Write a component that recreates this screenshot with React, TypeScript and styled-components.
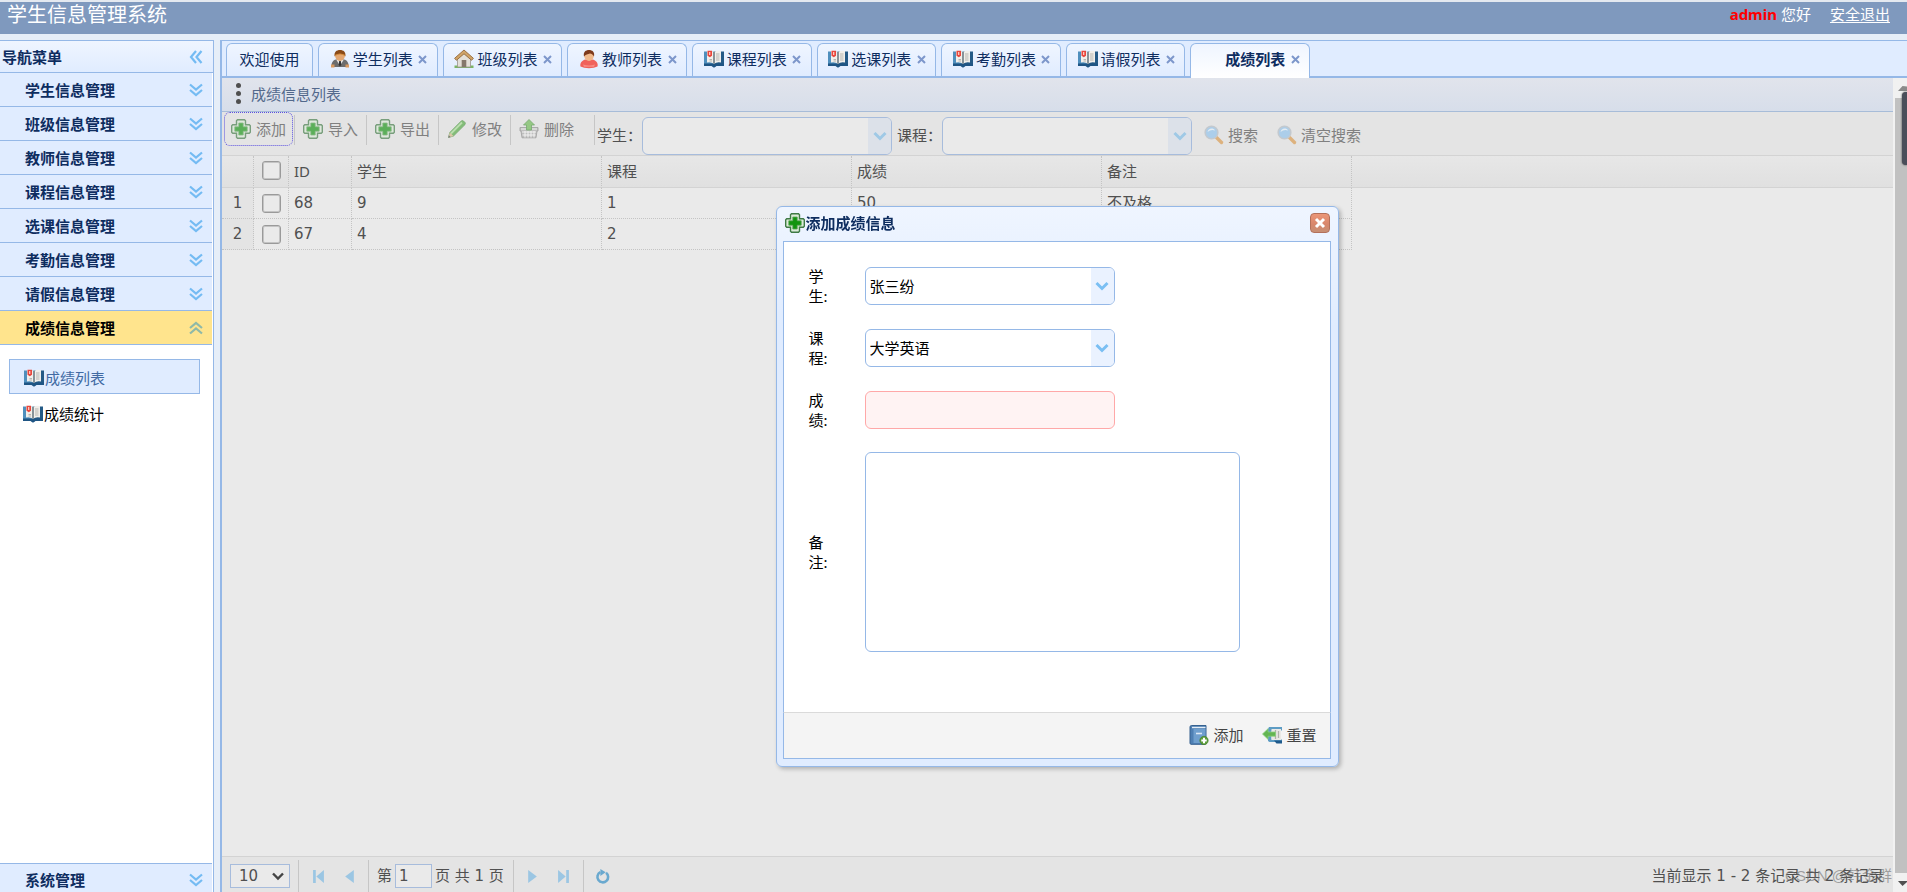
import React from "react";
import styled, { createGlobalStyle, css } from "styled-components";

const line = "#95b8e7";

const Global = createGlobalStyle`
  * { box-sizing: border-box; }
  html, body, #root { height: 100%; margin: 0; }
  body {
    overflow: hidden;
    background: #e6eef8;
    font: 15px/20px "Noto Sans", "Noto Sans CJK SC", sans-serif;
    color: #000;
  }
  button, input, select, textarea { font: inherit; color: inherit; margin: 0; }
  button { padding: 0; border: 0; background: none; white-space: nowrap; }
`;

/* ---------- icons ---------- */

const Icon = styled.svg<{ $size?: number }>`
  width: ${(p) => p.$size ?? 20}px;
  height: ${(p) => p.$size ?? 20}px;
  flex: none;
  display: block;
`;

const PlusIcon = () => (
  <Icon viewBox="0 0 20 20">
    <path d="M6.5 0.7h7l1 1v4h3.8l1 1v6.6l-1 1h-3.8v4l-1 1h-7l-1-1v-4H1.7l-1-1V6.7l1-1h3.8v-4z" fill="#dcebd9" stroke="#3f7a45" strokeWidth="1.4" />
    <path d="M7.8 4h4.4v3.8h4v4.4h-4V16H7.8v-3.8h-4V7.8h4z" fill="#12940f" stroke="#5aa357" strokeWidth="0.8" />
  </Icon>
);

const BookIcon = () => (
  <Icon viewBox="0 0 20 20">
    <path d="M0 2.500h10V18L8 17H0z" fill="#4f8fbd" />
    <path d="M10 2.500h10V17h-8l-2 1z" fill="#245a86" />
    <path d="M0 14.500h20V17h-7.500L10 18.800 7.500 17H0z" fill="#1f5584" />
    <path d="M3 2Q7 1.200 10 3Q13 1.200 17 2V13.500Q13 12.500 10 14.800Q7 12.500 3 13.500z" fill="#f1efeb" />
    <path d="M10 3v11.800" stroke="#7b8890" strokeWidth="1.800" />
    <path d="M12 5h3.500M12 7h3.500M12 9h3.500M12 11h3.500M5.500 10.500H8M5.500 12H8" stroke="#b5b5b0" strokeWidth="1" />
    <path d="M3.500 1.800h4.500v5L5.800 8.200 3.500 6.800z" fill="#e8463c" />
    <path d="M5.700 3v3" stroke="#fbd5d0" strokeWidth="1.200" />
  </Icon>
);

const StudentIcon = () => (
  <Icon viewBox="0 0 20 20">
    <path d="M1.500 18c-.5-4 1.500-7 4.500-7.500h8c3 .5 5 3.500 4.500 7.500z" fill="#6d6d6d" />
    <path d="M6.500 11h7L10 17z" fill="#e9e9e9" />
    <path d="M9.200 12h1.600l.6 4-1.400 1.500L8.600 16z" fill="#333" />
    <path d="M1 15.500h3.500v3H1zM15.500 15.500H19v3h-3.500z" fill="#d99b62" />
    <ellipse cx="10" cy="7.200" rx="4.800" ry="4.800" fill="#e3a772" />
    <path d="M4.600 7.500C4 3 6.500 1 10 1s6 2 5.400 6.500c-.9-1.500-3-2.500-5.400-2.500s-4.500 1-5.400 2.500z" fill="#8a4a17" />
    <path d="M5 6.500Q10 3.500 15 6.500" fill="none" stroke="#d98f3c" strokeWidth="1.200" />
  </Icon>
);

const TeacherIcon = () => (
  <Icon viewBox="0 0 20 20">
    <path d="M1.500 17.500c-1-3 1.500-6.500 5-7h7c3.500.5 6 4 5 7q-3 1.800-8.500 1.800t-8.500-1.800z" fill="#f0625c" />
    <path d="M4 15.500q6 2 12 0l-1 2.300H5z" fill="#f98e86" />
    <ellipse cx="10" cy="7.200" rx="4.700" ry="4.800" fill="#f0b98c" />
    <path d="M5 7.500C4 3 6.800 1 10 1s6 2 5 6.500C13.800 5.500 12.500 4.800 11 4.500 9 5.300 6.500 5.500 5 7.500z" fill="#7d3a1c" />
  </Icon>
);

const HouseIcon = () => (
  <Icon viewBox="0 0 20 20">
    <path d="M0.500 16.500h19V19h-19z" fill="#7cb565" />
    <path d="M3.500 9.500L10 4l6.500 5.500V18h-13z" fill="#e4e0d8" stroke="#9a948b" strokeWidth="0.800" />
    <path d="M7.700 11h4.600v7H7.700z" fill="#85776a" />
    <path d="M10 1L0.600 9.300l1.800 2L10 4.800l7.600 6.500 1.800-2z" fill="#d0a468" stroke="#94693a" strokeWidth="0.900" />
  </Icon>
);

const PencilIcon = () => (
  <Icon viewBox="0 0 20 20">
    <path d="M1.500 18.500l1.300-5L14.300 1.900q1-.9 2.400.3l1.100 1.100q1.100 1.300.2 2.300L6.500 17z" fill="#4fa83f" stroke="#3d8a35" strokeWidth="0.800" />
    <path d="M4 14.500L15 3.500" stroke="#a5dc93" strokeWidth="1.800" />
    <path d="M1.500 18.500l1.300-5L6.500 17z" fill="#d9b98a" />
    <path d="M1.200 18.800l.7-2.600 1.800 1.800z" fill="#444" />
  </Icon>
);

const BasketIcon = () => (
  <Icon viewBox="0 0 20 20">
    <path d="M1 8.500h18V12h-1l-1 6.800H3L2 12H1z" fill="#ababab" stroke="#858585" strokeWidth="0.900" />
    <path d="M3 13h14M3.500 16h13M6 12v6.500M9 12v6.500M12 12v6.500M15 12v6.500" stroke="#fafafa" strokeWidth="1" />
    <path d="M2 10h16" stroke="#ececec" strokeWidth="1.200" />
    <path d="M10 0.500l5.500 5.500h-3v5h-5V6h-3z" fill="#6cba52" stroke="#3f8a35" strokeWidth="0.800" />
  </Icon>
);

const SearchIcon = () => (
  <Icon viewBox="0 0 20 20">
    <path d="M12.500 12.500l5 5" stroke="#d98a2b" strokeWidth="3.400" strokeLinecap="round" />
    <circle cx="7.500" cy="7.500" r="6.300" fill="#7fbdf0" stroke="#a9b4bf" strokeWidth="1.600" />
    <path d="M3.500 7q1-4 5-3.500 2 .3 2.500 2-4-1.500-7.500 1.500z" fill="#e6f4ff" />
  </Icon>
);

const SaveBookIcon = () => (
  <Icon viewBox="0 0 20 20">
    <path d="M1 2q0-1.500 1.500-1.500H17V18q0 1-1 1.300H2Q1 19.300 1 18z" fill="#4f80b4" stroke="#36618f" />
    <path d="M4.500 4H16.500v14H4.500z" fill="#6f9fce" />
    <path d="M3 2.500h13.500" stroke="#e4edf6" strokeWidth="1.400" />
    <path d="M7 8.500h6" stroke="#dbe8f5" strokeWidth="1.600" />
    <circle cx="15" cy="15.500" r="4.200" fill="#5d9c3a" stroke="#3f7d25" strokeWidth="0.600" />
    <path d="M15 12.800v5.400M12.300 15.500h5.400" stroke="#fff" strokeWidth="2" />
  </Icon>
);

const ResetIcon = () => (
  <Icon viewBox="0 0 20 20">
    <path d="M7 2h13v3.500H9.500v9H20V17H7.500L6 16V4z" fill="#5d9cc4" />
    <path d="M12 15.500h8v3h-5.500z" fill="#1f5a8c" />
    <path d="M9.500 4h9.500v11H9.500z" fill="#e9e9e6" />
    <path d="M13.500 5v9M16.500 6v7" stroke="#b0b0ac" strokeWidth="1.300" />
    <path d="M0.500 9L6 3.800v3.200h7.500v4.200H6v3.100z" fill="#63b552" stroke="#8ccf7c" strokeWidth="0.800" />
  </Icon>
);

const DoubleChevron = ({ turn = 0, color = "#74bbf3" }: { turn?: number; color?: string }) => (
  <Icon viewBox="0 0 14 14" $size={14}>
    <g fill="none" stroke={color} strokeWidth="2.200" transform={`rotate(${turn} 7 7)`}>
      <path d="M1 1.500L7 6.500 13 1.500" />
      <path d="M1 7L7 12 13 7" />
    </g>
  </Icon>
);

const ChevronDown = ({ color }: { color: string }) => (
  <Icon viewBox="0 0 14 14" $size={14}>
    <path d="M1.500 4L7 9.500 12.500 4" fill="none" stroke={color} strokeWidth="3" />
  </Icon>
);

/* ---------- page frame ---------- */

const Page = styled.div`
  height: 100vh;
  display: flex;
  flex-direction: column;
  overflow: hidden;
`;

const Header = styled.header`
  display: flex;
  align-items: flex-start;
  justify-content: space-between;
  height: 34px;
  padding: 0 17px 0 7px;
  border-top: 2px solid #e4e9f0;
  background: #7f99be;
  color: #fff;
`;

const SiteTitle = styled.h1`
  margin: 0;
  font-size: 20px;
  line-height: 26px;
  font-weight: 400;
`;

const Account = styled.div`
  display: flex;
  line-height: 24px;
  gap: 4px;
  b { color: #f00; }
  a { color: #fff; margin-left: 15px; text-underline-offset: 2px; }
`;

const Body = styled.div`
  flex: 1;
  min-height: 0;
  display: flex;
  gap: 6px;
  margin-top: 6px;
`;

/* ---------- sidebar ---------- */

const Sidebar = styled.nav`
  width: 214px;
  flex: none;
  display: flex;
  flex-direction: column;
  border-top: 1px solid ${line};
  border-right: 1px solid ${line};
  background: #fff;
`;

const SidebarTitle = styled.div`
  display: flex;
  align-items: center;
  justify-content: space-between;
  height: 32px;
  padding: 0 10px 0 2px;
  border-bottom: 1px solid ${line};
  background: linear-gradient(#eff5ff, #e0ecff);
  color: #0e2d5f;
  font-weight: 700;
`;

const GroupHeader = styled.button<{ $open?: boolean; $last?: boolean }>`
  display: flex;
  flex: none;
  align-items: center;
  justify-content: space-between;
  width: 212px;
  height: 34px;
  padding: 0 9px 0 25px;
  border-bottom: 1px solid ${line};
  background: ${(p) => (p.$open ? "#ffe48d" : "#e0ecff")};
  color: ${(p) => (p.$open ? "#000" : "#0e2d5f")};
  font-weight: 700;
  ${(p) => p.$last && css`
    height: 29px;
    padding-top: 4px;
    border-top: 1px solid ${line};
    border-bottom: 0;
  `}
`;

const MenuList = styled.div`
  flex: 1;
  display: flex;
  flex-direction: column;
  gap: 1px;
  padding: 14px 13px 0 9px;
`;

const MenuLink = styled.a<{ $active?: boolean }>`
  display: flex;
  align-items: center;
  gap: 1px;
  height: 35px;
  padding: 3px 0 0 ${(p) => (p.$active ? 14 : 13)}px;
  border: 1px solid ${(p) => (p.$active ? line : "transparent")};
  background: ${(p) => (p.$active ? "#e0ecff" : "transparent")};
  color: ${(p) => (p.$active ? "#416aa3" : "#000")};
  text-decoration: none;
`;

/* ---------- tabs ---------- */

const Main = styled.main`
  flex: 1;
  min-width: 0;
  display: flex;
  flex-direction: column;
  border-left: 2px solid ${line};
  border-top: 1px solid ${line};
`;

const TabBar = styled.div`
  display: flex;
  gap: 5px;
  height: 37px;
  padding: 2px 0 0 4px;
  border-bottom: 2px solid ${line};
  background: #e0ecff;
`;

const TabSet = styled.div`
  display: flex;
  gap: 5px;
  width: 992px;
`;

const Tab = styled.div<{ $fixed?: boolean; $active?: boolean }>`
  display: flex;
  align-items: center;
  justify-content: center;
  gap: 5px;
  padding: 0 0 ${(p) => (p.$active ? 4 : 2)}px ${(p) => (p.$fixed ? 0 : 2)}px;
  ${(p) => (p.$fixed ? "width: 87px;" : "flex: 1;")}
  height: ${(p) => (p.$active ? 35 : 33)}px;
  border: 1px solid ${line};
  border-bottom: 0;
  border-radius: 6px 6px 0 0;
  background: ${(p) => (p.$active ? "linear-gradient(#eff5ff, #fff)" : "linear-gradient(#eff5ff, #e0ecff)")};
  color: #0e2d5f;
  font-weight: ${(p) => (p.$active ? 700 : 400)};
`;

const TabLabel = styled.button`
  display: flex;
  align-items: center;
  gap: 3px;
  font-weight: inherit;
`;

const IconSpace = styled.span`
  width: 20px;
`;

const TabClose = styled.button`
  display: grid;
  place-items: center;
  width: 10px;
  height: 20px;
`;

const Workspace = styled.div`
  flex: 1;
  min-height: 0;
  display: flex;
`;

/* ---------- grid panel ---------- */

const Panel = styled.section`
  position: relative;
  flex: 1;
  min-width: 0;
  display: flex;
  flex-direction: column;
  background: #eaeaea;
  color: #505050;
`;

const PanelTitle = styled.div`
  display: flex;
  align-items: center;
  gap: 10px;
  height: 34px;
  padding: 0 0 2px 14px;
  border-bottom: 1px solid #a7bcd8;
  background: linear-gradient(#e1e4ec, #d7deea);
  color: #53698c;
`;

const Dots = styled.span`
  display: grid;
  gap: 2px;
  i { width: 5px; height: 5px; margin-bottom: 1px; border-radius: 50%; background: #4f4f4f; }
`;

const Toolbar = styled.div`
  display: flex;
  align-items: flex-start;
  height: 44px;
  padding-left: 2px;
  border-bottom: 1px solid #d3d3d3;
  background: #e4e4e4;
`;

const ToolButton = styled.button<{ $focused?: boolean }>`
  display: flex;
  align-items: center;
  justify-content: center;
  gap: 5px;
  width: 69px;
  height: 34px;
  border: 1px dotted ${(p) => (p.$focused ? "#5a4fe0" : "transparent")};
  border-radius: 6px;
  color: #808080;
  svg { opacity: 0.65; }
`;

const ToolRule = styled.span<{ $wide?: boolean }>`
  width: 1px;
  height: 30px;
  margin: 3px ${(p) => (p.$wide ? 2 : 1)}px 0 ${(p) => (p.$wide ? 13 : 1)}px;
  background: #c6c6c6;
`;

const Filter = styled.label`
  display: flex;
  align-items: center;
  height: 38px;
  margin: 5px 5px 0 0;
`;

const FilterName = styled.span`
  width: 45px;
  padding-bottom: 2px;
  color: #505050;
`;

const SearchButton = styled.button`
  display: flex;
  align-items: center;
  gap: 4px;
  height: 36px;
  margin: 5px 12px 0 7px;
  color: #808080;
  svg { opacity: 0.55; }
`;

const Combo = styled.span<{ $muted?: boolean }>`
  position: relative;
  display: flex;
  width: 250px;
  height: 38px;
  border: 1px solid ${(p) => (p.$muted ? "#a7bcdc" : line)};
  border-radius: 6px;
  overflow: hidden;
  background: ${(p) => (p.$muted ? "#eaeaea" : "#fff")};
  select {
    width: 100%;
    padding: 0 26px 0 4px;
    border: 0;
    outline: 0;
    appearance: none;
    background: transparent;
  }
`;

const ComboArrow = styled.span<{ $muted?: boolean }>`
  position: absolute;
  inset: 0 0 0 auto;
  width: 23px;
  display: grid;
  place-items: center;
  pointer-events: none;
  background: ${(p) => (p.$muted ? "#dce1e9" : "#eaf2ff")};
`;

const TableArea = styled.div`
  flex: 1;
  background: linear-gradient(#e7e7e7, #e0e0e0) 0 0 / 100% 31px no-repeat;
`;

const Table = styled.table`
  table-layout: fixed;
  width: 100%;
  border-collapse: separate;
  border-spacing: 0;
  font-family: "DejaVu Sans", "Noto Sans CJK SC", sans-serif;

  thead th {
    height: 32px;
    padding: 0 5px 2px;
    text-align: left;
    font-weight: 400;
    font-family: "Noto Sans", "Noto Sans CJK SC", sans-serif;
    border-right: 1px dotted #c4c4c4;
    border-bottom: 1px solid #d3d3d3;
  }
  tbody td {
    height: 31px;
    padding: 0 5px;
    border-right: 1px dotted #c4c4c4;
    border-bottom: 1px dotted #c4c4c4;
  }
  tbody td:first-child { text-align: center; background: #e4e4e4; }
  th:last-child, td:last-child { border-right: 0; }
  tbody td:last-child { border-bottom: 0; }
  input {
    appearance: none;
    display: block;
    width: 19px;
    height: 19px;
    margin: 0 auto;
    border: 1px solid #9a9a9a;
    border-radius: 3px;
    box-shadow: inset 0 0 0 1px #c4c4c4;
    background: #eaeaea;
  }
`;

/* ---------- pager ---------- */

const Pager = styled.div`
  display: flex;
  align-items: center;
  height: 36px;
  padding: 3px 9px 0 8px;
  border-top: 1px solid #d3d3d3;
  background: #e4e4e4;
  font-family: "DejaVu Sans", "Noto Sans CJK SC", sans-serif;
`;

const PageSize = styled.span`
  position: relative;
  display: flex;
  width: 60px;
  height: 24px;
  margin-right: 2px;
  border: 1px solid #a7bcdc;
  background: #eaeaea;
  select {
    width: 100%;
    padding: 0 0 0 8px;
    border: 0;
    appearance: none;
    background: transparent;
  }
  svg { position: absolute; right: 4px; top: 4px; pointer-events: none; }
`;

const PagerRule = styled.span`
  width: 1px;
  height: 32px;
  margin: 0 6px;
  background: #c6c6c6;
`;

const PagerButton = styled.button`
  display: grid;
  place-items: center;
  width: 26px;
  height: 26px;
`;

const PagerPair = styled.span`
  display: flex;
  gap: 5px;
`;

const PageNumber = styled.input`
  width: 37px;
  height: 24px;
  padding: 0 3px;
  border: 1px solid #a7bcdc;
  background: #eaeaea;
`;

const PageWords = styled.label`
  display: flex;
  align-items: center;
  gap: 3px;
  margin: 0 3px 0 2px;
  white-space: pre;
`;

const Summary = styled.span`
  margin-left: auto;
  white-space: pre;
`;

const Watermark = styled.span`
  position: absolute;
  right: 1px;
  bottom: 6px;
  color: rgba(110, 110, 110, 0.6);
  font-family: "Liberation Sans", "Noto Sans CJK SC", sans-serif;
`;

/* ---------- scroll bar ---------- */

const ScrollTrack = styled.div`
  position: relative;
  width: 14px;
  flex: none;
  display: flex;
  flex-direction: column;
  padding-left: 2px;
  background: #f1f1f1;
`;

const ScrollArrow = styled.span<{ $down?: boolean }>`
  height: ${(p) => (p.$down ? 19 : 20)}px;
  flex: none;
  display: flex;
  justify-content: flex-end;
  align-items: center;
`;

const ScrollThumb = styled.span`
  flex: 1;
  background: #c1c1c1;
`;

const SideHandle = styled.span`
  position: absolute;
  right: 0;
  top: 14px;
  width: 5px;
  height: 73px;
  border-radius: 4px 0 0 4px;
  background: #4a4e5a;
  box-shadow: 0 0 2px #333;
`;

/* ---------- dialog ---------- */

const Dialog = styled.form`
  position: fixed;
  left: calc(50% + 103px);
  top: 206px;
  width: 563px;
  height: 561px;
  margin-left: -281px;
  display: flex;
  flex-direction: column;
  padding: 6px 7px 7px 6px;
  border: 1px solid ${line};
  border-radius: 6px;
  background: linear-gradient(#eff5ff, #e0ecff 120px);
  box-shadow: 2px 2px 4px rgba(0, 0, 0, 0.25);
`;

const DialogTitle = styled.div`
  display: flex;
  align-items: center;
  gap: 1px;
  height: 20px;
  margin: 0 1px 8px 2px;
  color: #0e2d5f;
  font-weight: 700;
`;

const CloseButton = styled.button`
  display: grid;
  place-items: center;
  width: 20px;
  height: 20px;
  margin-left: auto;
  border: 1px solid #b3705a;
  border-radius: 4px;
  background: linear-gradient(#eb9678, #d9876c 55%, #c68f74);
`;

const DialogBody = styled.div`
  flex: 1;
  display: flex;
  flex-direction: column;
  gap: 22px;
  padding: 24px 25px 0;
  border: 1px solid ${line};
  border-bottom: 0;
  background: #fff;
`;

const Field = styled.label`
  display: flex;
  align-items: center;
  gap: 36px;
`;

const FieldName = styled.span`
  width: 20px;
  white-space: pre;
`;

const InvalidInput = styled.input`
  width: 250px;
  height: 38px;
  padding: 0 4px;
  border: 1px solid #ffa8a8;
  border-radius: 6px;
  background: #fff3f3;
`;

const NoteArea = styled.textarea`
  width: 375px;
  height: 200px;
  padding: 4px;
  border: 1px solid ${line};
  border-radius: 6px;
  resize: none;
`;

const DialogFooter = styled.div`
  display: flex;
  justify-content: flex-end;
  gap: 19px;
  height: 47px;
  padding: 0 13px 2px;
  border: 1px solid ${line};
  border-top-color: #dadada;
  background: #f4f4f4;
  color: #444;
`;

const DialogButton = styled.button`
  display: flex;
  align-items: center;
  gap: 4px;
`;

/* ---------- data ---------- */

const groups = ["学生信息管理", "班级信息管理", "教师信息管理", "课程信息管理", "选课信息管理", "考勤信息管理", "请假信息管理"];

const tabs: { name: string; icon?: React.ReactNode }[] = [
  { name: "学生列表", icon: <StudentIcon /> },
  { name: "班级列表", icon: <HouseIcon /> },
  { name: "教师列表", icon: <TeacherIcon /> },
  { name: "课程列表", icon: <BookIcon /> },
  { name: "选课列表", icon: <BookIcon /> },
  { name: "考勤列表", icon: <BookIcon /> },
  { name: "请假列表", icon: <BookIcon /> },
  { name: "成绩列表" },
];

const tools = [
  { name: "添加", icon: <PlusIcon /> },
  { name: "导入", icon: <PlusIcon /> },
  { name: "导出", icon: <PlusIcon /> },
  { name: "修改", icon: <PencilIcon /> },
  { name: "删除", icon: <BasketIcon /> },
];

const rows = [
  ["68", "9", "1", "50", "不及格"],
  ["67", "4", "2", "", ""],
];

const pagerBlue = "#9bc6e3";

function ComboBox({ value, label, muted }: { value?: string; label: string; muted?: boolean }) {
  return (
    <Combo $muted={muted}>
      <select aria-label={label} defaultValue={value}>
        <option>{value ?? ""}</option>
      </select>
      <ComboArrow $muted={muted}>
        <ChevronDown color={muted ? "#9fc9e6" : "#7abff3"} />
      </ComboArrow>
    </Combo>
  );
}

export default function App() {
  return (
    <Page>
      <Global />
      <Header>
        <SiteTitle>学生信息管理系统</SiteTitle>
        <Account>
          <b>admin</b>
          <span>您好</span>
          <a href="#logout">安全退出</a>
        </Account>
      </Header>
      <Body>
        <Sidebar>
          <SidebarTitle>
            导航菜单
            <button aria-label="收起"><DoubleChevron turn={90} /></button>
          </SidebarTitle>
          {groups.map((g) => (
            <GroupHeader key={g}>{g}<DoubleChevron /></GroupHeader>
          ))}
          <GroupHeader $open>成绩信息管理<DoubleChevron turn={180} color="#8fb9a8" /></GroupHeader>
          <MenuList>
            <MenuLink $active href="#scores"><BookIcon />成绩列表</MenuLink>
            <MenuLink href="#stats"><BookIcon />成绩统计</MenuLink>
          </MenuList>
          <GroupHeader $last>系统管理<DoubleChevron /></GroupHeader>
        </Sidebar>

        <Main>
          <TabBar>
            <Tab $fixed><TabLabel>欢迎使用</TabLabel></Tab>
            <TabSet>
              {tabs.map((t) => (
                <Tab key={t.name} $active={!t.icon}>
                  <TabLabel>{t.icon ?? <IconSpace />}{t.name}</TabLabel>
                  <TabClose aria-label={`关闭${t.name}`}>
                    <Icon viewBox="0 0 9 9" $size={9}><path d="M1 1l7 7M8 1l-7 7" stroke="#7d97cb" strokeWidth="2" /></Icon>
                  </TabClose>
                </Tab>
              ))}
            </TabSet>
          </TabBar>

          <Workspace>
            <Panel>
              <PanelTitle><Dots><i /><i /><i /></Dots>成绩信息列表</PanelTitle>
              <Toolbar>
                {tools.map((t, i) => (
                  <React.Fragment key={t.name}>
                    <ToolButton $focused={i === 0}>{t.icon}{t.name}</ToolButton>
                    <ToolRule $wide={i === tools.length - 1} />
                  </React.Fragment>
                ))}
                <Filter><FilterName>学生：</FilterName><ComboBox label="学生" muted /></Filter>
                <Filter><FilterName>课程：</FilterName><ComboBox label="课程" muted /></Filter>
                <SearchButton><SearchIcon />搜索</SearchButton>
                <SearchButton><SearchIcon />清空搜索</SearchButton>
              </Toolbar>
              <TableArea>
                <Table>
                  <colgroup>
                    <col width="32" /><col width="35" /><col width="63" />
                    <col width="250" /><col width="250" /><col width="250" /><col width="250" /><col />
                  </colgroup>
                  <thead>
                    <tr>
                      <th /><th><input type="checkbox" aria-label="全选" /></th>
                      <th>ID</th><th>学生</th><th>课程</th><th>成绩</th><th>备注</th><th />
                    </tr>
                  </thead>
                  <tbody>
                    {rows.map((r, i) => (
                      <tr key={r[0]}>
                        <td>{i + 1}</td>
                        <td><input type="checkbox" aria-label={`选择 ${r[0]}`} /></td>
                        {r.map((c, j) => <td key={j}>{c}</td>)}
                        <td />
                      </tr>
                    ))}
                  </tbody>
                </Table>
              </TableArea>
              <Pager>
                <PageSize>
                  <select aria-label="每页条数"><option>10</option></select>
                  <Icon viewBox="0 0 14 14" $size={14}><path d="M2 4.500l5 5 5-5" fill="none" stroke="#444" strokeWidth="2.400" /></Icon>
                </PageSize>
                <PagerRule />
                <PagerPair>
                  <PagerButton aria-label="首页">
                    <Icon viewBox="0 0 12 12" $size={13}><path d="M1 0h2.500v12H1zM11 0v12L4 6z" fill={pagerBlue} /></Icon>
                  </PagerButton>
                  <PagerButton aria-label="上一页">
                    <Icon viewBox="0 0 12 12" $size={13}><path d="M10 0v12L2 6z" fill={pagerBlue} /></Icon>
                  </PagerButton>
                </PagerPair>
                <PagerRule />
                <PageWords>第<PageNumber defaultValue="1" />页 共 1 页</PageWords>
                <PagerRule />
                <PagerPair>
                  <PagerButton aria-label="下一页">
                    <Icon viewBox="0 0 12 12" $size={13}><path d="M2 0v12l8-6z" fill={pagerBlue} /></Icon>
                  </PagerButton>
                  <PagerButton aria-label="末页">
                    <Icon viewBox="0 0 12 12" $size={13}><path d="M8.500 0H11v12H8.500zM1 0v12l7-6z" fill={pagerBlue} /></Icon>
                  </PagerButton>
                </PagerPair>
                <PagerRule />
                <PagerButton aria-label="刷新">
                  <Icon viewBox="0 0 14 14" $size={15}>
                    <path d="M10.300 3.500A5 5 0 1 1 5 3" fill="none" stroke="#6aa9cf" strokeWidth="2.400" />
                    <path d="M5 0l5 3-5 3.500z" fill="#6aa9cf" />
                  </Icon>
                </PagerButton>
                <Summary>当前显示 1 - 2 条记录 共 2 条记录</Summary>
                <Watermark>CSDN @韩金群</Watermark>
              </Pager>
            </Panel>
            <ScrollTrack>
              <ScrollArrow><Icon viewBox="0 0 10 10" $size={10}><path d="M1 8h9V3.500L5.500 3z" fill="#8a8a8a" /></Icon></ScrollArrow>
              <ScrollThumb />
              <ScrollArrow $down><Icon viewBox="0 0 10 10" $size={10}><path d="M1 3h9v1L5.500 8z" fill="#505050" /></Icon></ScrollArrow>
              <SideHandle />
            </ScrollTrack>
          </Workspace>
        </Main>
      </Body>

      <Dialog role="dialog" aria-label="添加成绩信息" onSubmit={(e) => e.preventDefault()}>
        <DialogTitle>
          <PlusIcon />添加成绩信息
          <CloseButton type="button" aria-label="关闭">
            <Icon viewBox="0 0 12 12" $size={12}><path d="M2 2l8 8M10 2l-8 8" stroke="#fff" strokeWidth="3" /></Icon>
          </CloseButton>
        </DialogTitle>
        <DialogBody>
          <Field><FieldName>{"学\n生:"}</FieldName><ComboBox label="学生" value="张三纷" /></Field>
          <Field><FieldName>{"课\n程:"}</FieldName><ComboBox label="课程" value="大学英语" /></Field>
          <Field><FieldName>{"成\n绩:"}</FieldName><InvalidInput /></Field>
          <Field><FieldName>{"备\n注:"}</FieldName><NoteArea /></Field>
        </DialogBody>
        <DialogFooter>
          <DialogButton type="submit"><SaveBookIcon />添加</DialogButton>
          <DialogButton type="reset"><ResetIcon />重置</DialogButton>
        </DialogFooter>
      </Dialog>
    </Page>
  );
}
